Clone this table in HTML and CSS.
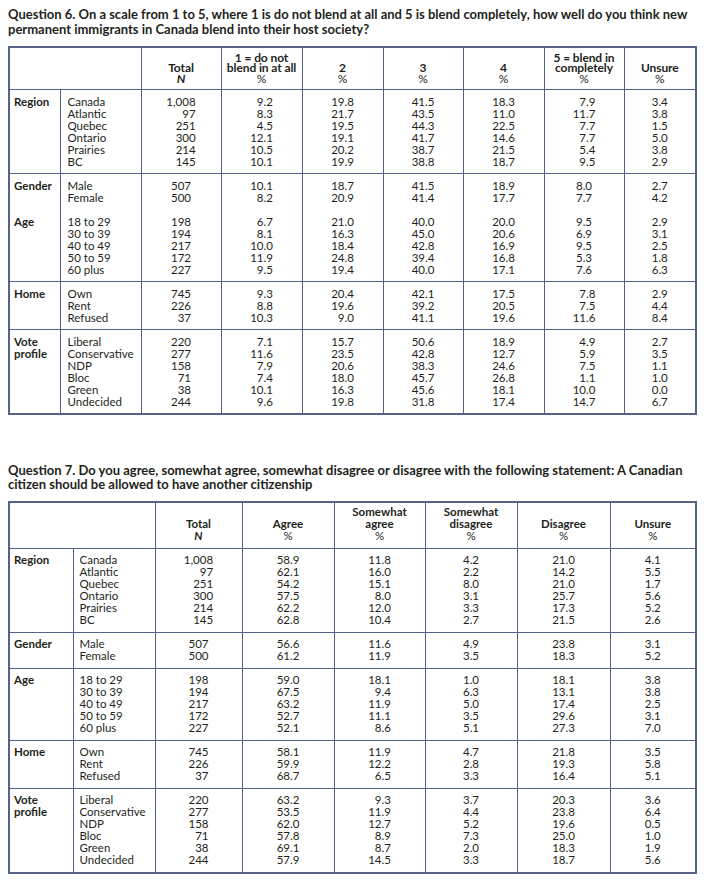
FILE: index.html
```html
<!DOCTYPE html>
<html lang="en">
<head>
<meta charset="utf-8">
<title>Survey tables</title>
<link rel="stylesheet" href="styles.css">
</head>
<body>
<section class="q q6">
  <h2 class="title">Question 6. On a scale from 1 to 5, where 1 is do not blend at all and 5 is blend completely, how well do you think new<br>permanent immigrants in Canada blend into their host society?</h2>
  <table class="t t6">
    <colgroup>
      <col class="w51"><col class="w81"><col class="w80"><col class="w81"><col class="w81"><col class="w80"><col class="w81"><col class="w80"><col class="w72">
    </colgroup>
    <thead>
      <tr>
        <th colspan="2"></th>
        <th>Total<br><i>N</i></th>
        <th>1 = do not<br>blend in at all<br><span class="pct">%</span></th>
        <th>2<br><span class="pct">%</span></th>
        <th>3<br><span class="pct">%</span></th>
        <th>4<br><span class="pct">%</span></th>
        <th>5 = blend in<br>completely<br><span class="pct">%</span></th>
        <th>Unsure<br><span class="pct">%</span></th>
      </tr>
    </thead>
    <tbody>
      <tr>
        <td class="grp">Region</td>
        <td class="lbl">Canada<br>Atlantic<br>Quebec<br>Ontario<br>Prairies<br>BC</td>
        <td class="num"><span>1,008<br>97<br>251<br>300<br>214<br>145</span></td>
        <td class="num"><span>9.2<br>8.3<br>4.5<br>12.1<br>10.5<br>10.1</span></td>
        <td class="num"><span>19.8<br>21.7<br>19.5<br>19.1<br>20.2<br>19.9</span></td>
        <td class="num"><span>41.5<br>43.5<br>44.3<br>41.7<br>38.7<br>38.8</span></td>
        <td class="num"><span>18.3<br>11.0<br>22.5<br>14.6<br>21.5<br>18.7</span></td>
        <td class="num"><span>7.9<br>11.7<br>7.7<br>7.7<br>5.4<br>9.5</span></td>
        <td class="num"><span>3.4<br>3.8<br>1.5<br>5.0<br>3.8<br>2.9</span></td>
      </tr>
      <tr>
        <td class="grp">Gender<br><br><br>Age</td>
        <td class="lbl">Male<br>Female<br><br>18 to 29<br>30 to 39<br>40 to 49<br>50 to 59<br>60 plus</td>
        <td class="num"><span>507<br>500<br><br>198<br>194<br>217<br>172<br>227</span></td>
        <td class="num"><span>10.1<br>8.2<br><br>6.7<br>8.1<br>10.0<br>11.9<br>9.5</span></td>
        <td class="num"><span>18.7<br>20.9<br><br>21.0<br>16.3<br>18.4<br>24.8<br>19.4</span></td>
        <td class="num"><span>41.5<br>41.4<br><br>40.0<br>45.0<br>42.8<br>39.4<br>40.0</span></td>
        <td class="num"><span>18.9<br>17.7<br><br>20.0<br>20.6<br>16.9<br>16.8<br>17.1</span></td>
        <td class="num"><span>8.0<br>7.7<br><br>9.5<br>6.9<br>9.5<br>5.3<br>7.6</span></td>
        <td class="num"><span>2.7<br>4.2<br><br>2.9<br>3.1<br>2.5<br>1.8<br>6.3</span></td>
      </tr>
      <tr>
        <td class="grp">Home</td>
        <td class="lbl">Own<br>Rent<br>Refused</td>
        <td class="num"><span>745<br>226<br>37</span></td>
        <td class="num"><span>9.3<br>8.8<br>10.3</span></td>
        <td class="num"><span>20.4<br>19.6<br>9.0</span></td>
        <td class="num"><span>42.1<br>39.2<br>41.1</span></td>
        <td class="num"><span>17.5<br>20.5<br>19.6</span></td>
        <td class="num"><span>7.8<br>7.5<br>11.6</span></td>
        <td class="num"><span>2.9<br>4.4<br>8.4</span></td>
      </tr>
      <tr>
        <td class="grp">Vote<br>profile</td>
        <td class="lbl">Liberal<br>Conservative<br>NDP<br>Bloc<br>Green<br>Undecided</td>
        <td class="num"><span>220<br>277<br>158<br>71<br>38<br>244</span></td>
        <td class="num"><span>7.1<br>11.6<br>7.9<br>7.4<br>10.1<br>9.6</span></td>
        <td class="num"><span>15.7<br>23.5<br>20.6<br>18.0<br>16.3<br>19.8</span></td>
        <td class="num"><span>50.6<br>42.8<br>38.3<br>45.7<br>45.6<br>31.8</span></td>
        <td class="num"><span>18.9<br>12.7<br>24.6<br>26.8<br>18.1<br>17.4</span></td>
        <td class="num"><span>4.9<br>5.9<br>7.5<br>1.1<br>10.0<br>14.7</span></td>
        <td class="num"><span>2.7<br>3.5<br>1.1<br>1.0<br>0.0<br>6.7</span></td>
      </tr>
    </tbody>
  </table>
</section>

<section class="q q7">
  <h2 class="title">Question 7. Do you agree, somewhat agree, somewhat disagree or disagree with the following statement: A Canadian<br>citizen should be allowed to have another citizenship</h2>
  <table class="t t7">
    <colgroup>
      <col class="w64"><col class="w82"><col class="w87"><col class="w92"><col class="w91"><col class="w92"><col class="w93"><col class="w86">
    </colgroup>
    <thead>
      <tr>
        <th colspan="2"></th>
        <th>Total<br><i>N</i></th>
        <th>Agree<br><span class="pct">%</span></th>
        <th>Somewhat<br>agree<br><span class="pct">%</span></th>
        <th>Somewhat<br>disagree<br><span class="pct">%</span></th>
        <th>Disagree<br><span class="pct">%</span></th>
        <th>Unsure<br><span class="pct">%</span></th>
      </tr>
    </thead>
    <tbody>
      <tr>
        <td class="grp">Region</td>
        <td class="lbl">Canada<br>Atlantic<br>Quebec<br>Ontario<br>Prairies<br>BC</td>
        <td class="num"><span>1,008<br>97<br>251<br>300<br>214<br>145</span></td>
        <td class="num"><span>58.9<br>62.1<br>54.2<br>57.5<br>62.2<br>62.8</span></td>
        <td class="num"><span>11.8<br>16.0<br>15.1<br>8.0<br>12.0<br>10.4</span></td>
        <td class="num"><span>4.2<br>2.2<br>8.0<br>3.1<br>3.3<br>2.7</span></td>
        <td class="num"><span>21.0<br>14.2<br>21.0<br>25.7<br>17.3<br>21.5</span></td>
        <td class="num"><span>4.1<br>5.5<br>1.7<br>5.6<br>5.2<br>2.6</span></td>
      </tr>
      <tr>
        <td class="grp">Gender</td>
        <td class="lbl">Male<br>Female</td>
        <td class="num"><span>507<br>500</span></td>
        <td class="num"><span>56.6<br>61.2</span></td>
        <td class="num"><span>11.6<br>11.9</span></td>
        <td class="num"><span>4.9<br>3.5</span></td>
        <td class="num"><span>23.8<br>18.3</span></td>
        <td class="num"><span>3.1<br>5.2</span></td>
      </tr>
      <tr>
        <td class="grp">Age</td>
        <td class="lbl">18 to 29<br>30 to 39<br>40 to 49<br>50 to 59<br>60 plus</td>
        <td class="num"><span>198<br>194<br>217<br>172<br>227</span></td>
        <td class="num"><span>59.0<br>67.5<br>63.2<br>52.7<br>52.1</span></td>
        <td class="num"><span>18.1<br>9.4<br>11.9<br>11.1<br>8.6</span></td>
        <td class="num"><span>1.0<br>6.3<br>5.0<br>3.5<br>5.1</span></td>
        <td class="num"><span>18.1<br>13.1<br>17.4<br>29.6<br>27.3</span></td>
        <td class="num"><span>3.8<br>3.8<br>2.5<br>3.1<br>7.0</span></td>
      </tr>
      <tr>
        <td class="grp">Home</td>
        <td class="lbl">Own<br>Rent<br>Refused</td>
        <td class="num"><span>745<br>226<br>37</span></td>
        <td class="num"><span>58.1<br>59.9<br>68.7</span></td>
        <td class="num"><span>11.9<br>12.2<br>6.5</span></td>
        <td class="num"><span>4.7<br>2.8<br>3.3</span></td>
        <td class="num"><span>21.8<br>19.3<br>16.4</span></td>
        <td class="num"><span>3.5<br>5.8<br>5.1</span></td>
      </tr>
      <tr>
        <td class="grp">Vote<br>profile</td>
        <td class="lbl">Liberal<br>Conservative<br>NDP<br>Bloc<br>Green<br>Undecided</td>
        <td class="num"><span>220<br>277<br>158<br>71<br>38<br>244</span></td>
        <td class="num"><span>63.2<br>53.5<br>62.0<br>57.8<br>69.1<br>57.9</span></td>
        <td class="num"><span>9.3<br>11.9<br>12.7<br>8.9<br>8.7<br>14.5</span></td>
        <td class="num"><span>3.7<br>4.4<br>5.2<br>7.3<br>2.0<br>3.3</span></td>
        <td class="num"><span>20.3<br>23.8<br>19.6<br>25.0<br>18.3<br>18.7</span></td>
        <td class="num"><span>3.6<br>6.4<br>0.5<br>1.0<br>1.9<br>5.6</span></td>
      </tr>
    </tbody>
  </table>
</section>
</body>
</html>
```

FILE: styles.css
```css
html, body {
  background: #ffffff;
}

body {
  margin: 0;
  padding: 7px 8px;
  font-family: Lato, "Open Sans", "Liberation Sans", sans-serif;
  color: #231f20;
}

.title {
  margin: 0 0 10px;
  font-size: 13px;
  line-height: 14.5px;
  font-weight: 700;
  white-space: nowrap;
}

.q7 {
  margin-top: 48px;
}

.q7 .title {
  line-height: 14px;
  margin-bottom: 10px;
}

.t {
  border-collapse: collapse;
  table-layout: fixed;
  width: 688px;
  border: 2px solid #56628c;
  font-size: 11.5px;
  line-height: 12px;
}

.t th,
.t td {
  border: 1px solid #56628c;
  padding: 6px 0 5px;
  vertical-align: top;
}

.t th {
  vertical-align: bottom;
  text-align: center;
  font-weight: 700;
  font-size: 12px;
  line-height: 10.5px;
  padding: 0 0 5px;
  height: 36px;
  letter-spacing: -0.1px;
}

.t7 th {
  font-size: 11.5px;
  line-height: 12px;
  padding-bottom: 6px;
  height: 39px;
  letter-spacing: 0;
}

.t th i {
  font-style: italic;
}

.t .pct {
  font-weight: 400;
}

.t .grp {
  font-weight: 700;
  padding-left: 4px;
}

.t .lbl {
  padding-left: 7px;
  white-space: nowrap;
}

.t .num {
  text-align: center;
}

.num span {
  display: inline-block;
  text-align: right;
}

.t7 td {
  padding-top: 5px;
  padding-bottom: 6px;
}

.t7 .lbl {
  padding-left: 6px;
}

.w51 { width: 51px; }
.w64 { width: 64px; }
.w72 { width: 72px; }
.w80 { width: 80px; }
.w81 { width: 81px; }
.w82 { width: 82px; }
.w86 { width: 86px; }
.w87 { width: 87px; }
.w91 { width: 91px; }
.w92 { width: 92px; }
.w93 { width: 93px; }
```
